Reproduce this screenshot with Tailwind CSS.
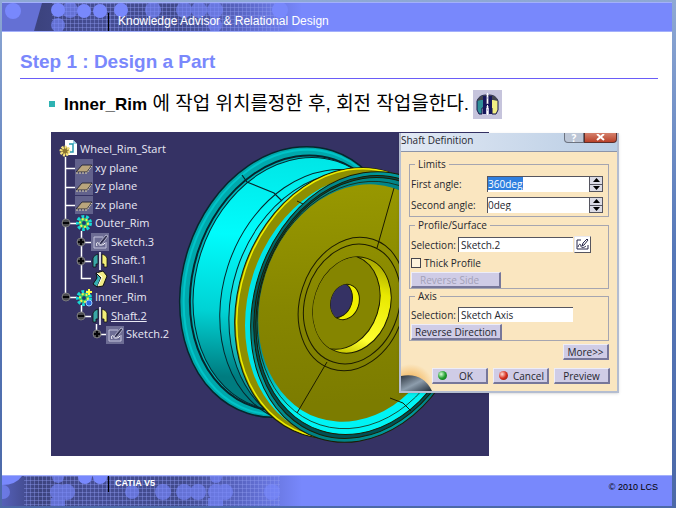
<!DOCTYPE html>
<html lang="ko">
<head>
  <meta charset="UTF-8">
  <meta name="viewport" content="width=device-width, initial-scale=1.0">
  <title>Step 1 : Design a Part</title>
  <script src="https://cdn.jsdelivr.net/npm/@tailwindcss/browser@4"></script>
</head>
<body class="bg-gradient-to-b from-[#8ea8d4] via-[#5577b8] to-[#4c69a8] font-['Liberation_Sans','Noto_Sans_CJK_KR',sans-serif]">

  <!-- Shared icons -->
  <svg class="absolute size-0">
    <defs>
      <pattern id="mesh" width="4" height="4" patternUnits="userSpaceOnUse">
        <path d="M0 .5H4M.5 0V4" stroke="#8f9cf0" stroke-opacity=".4" fill="none"/>
      </pattern>
      <linearGradient id="fade">
        <stop offset="0" stop-color="#5560b8"/>
        <stop offset=".12" stop-color="#3c437e"/>
        <stop offset=".3" stop-color="#454d93"/>
        <stop offset=".6" stop-color="#414a8c"/>
        <stop offset=".8" stop-color="#5a66c4"/>
        <stop offset="1" stop-color="#7888fc"/>
      </linearGradient>
      <symbol id="plane" viewBox="0 0 18 18">
        <path d="M0 0h18v18H0z" fill="#62628c"/>
        <path d="M1 13L7 6h10l-5 7z" fill="#b9a57c" stroke="#2b2b3c"/>
        <path d="M1 14h11l5-7" fill="none" stroke="#e5d9b0" stroke-dasharray="2 1"/>
      </symbol>
      <symbol id="gear" viewBox="0 0 18 18">
        <circle cx="9" cy="9" r="6" fill="none" stroke="#17d9d6" stroke-width="4" stroke-dasharray="2.6 1.6"/>
        <circle cx="9" cy="9" r="5" fill="#35c56b"/>
        <circle cx="9" cy="9" r="4" fill="none" stroke="#f4ef52" stroke-width="2" stroke-dasharray="2 2"/>
        <circle cx="9" cy="9" r="2" fill="#1b3d77"/>
      </symbol>
      <symbol id="sketch" viewBox="0 0 18 18">
        <path d="M0 0h18v18H0z" fill="#6d6d94"/>
        <path d="M3 4h9M3 4v11h12V9" fill="none" stroke="#c3c3dc"/>
        <path d="M6 13C4 9 8 9 8 11s5 1 6-1" fill="none" stroke="#fff"/>
        <path d="M8 12l1-3 6-7 2 1-6 8z" fill="#30304f" stroke="#c8c8e0" stroke-width=".8"/>
      </symbol>
      <symbol id="shaft" viewBox="0 0 18 18">
        <path d="M2 15V6q1-3 5-4v10H5v3z" fill="#3aa7a7" stroke="#111" stroke-width=".8"/>
        <path d="M16 15V6q-1-3-5-4v10h2v3z" fill="#f3ef77" stroke="#111" stroke-width=".8"/>
        <path d="M9 0v18" stroke="#fff" stroke-width="1.6"/>
      </symbol>
      <symbol id="shell" viewBox="0 0 18 18">
        <path d="M5 3L12 1l4 5-4 10-6 1 4-9z" fill="#f2ec86" stroke="#111"/>
        <path d="M5 3l5 5-4 9-4-3 4-6z" fill="#36aeb4" stroke="#111"/>
        <path d="M6 3l5 4-4 9" fill="none" stroke="#fff"/>
      </symbol>
    </defs>
  </svg>

  <div class="flex min-h-screen flex-col pt-[2px] pr-[4px] pb-[2px] pl-[2px]">
    <div class="flex flex-1 flex-col bg-white">

      <!-- Header band -->
      <header class="relative flex h-[30px] items-end border-y border-[#a3b0fb] bg-[#7888fc]">
        <svg class="absolute inset-y-0 left-0 h-full w-[300px]" viewBox="0 0 300 28" preserveAspectRatio="none">
          <path d="M0 0h300v28H0z" fill="url(#fade)"/>
          <path d="M0 0h40l-8 28H0z" fill="#6470d4"/>
          <path d="M50 0h230v28H50z" fill="url(#mesh)"/>
          <g fill="#7888fc">
            <circle cx="11" cy="8" r="8"/>
            <circle cx="56" cy="7" r="7"/>
            <circle cx="82" cy="8" r="7"/>
            <circle cx="98" cy="8" r="7"/>
            <circle cx="119" cy="7" r="7"/>
            <circle cx="278" cy="7" r="8"/>
            <g opacity=".65">
              <circle cx="56" cy="22" r="7"/>
              <circle cx="68" cy="7" r="8"/>
              <circle cx="151" cy="7" r="8"/>
              <circle cx="182" cy="7" r="8"/>
              <circle cx="197" cy="7" r="8"/>
              <circle cx="213" cy="7" r="8"/>
              <circle cx="213" cy="22" r="7"/>
            </g>
          </g>
        </svg>
        <p class="relative ml-[106px] border-l border-black pt-[1px] pb-[2px] pl-[9px] text-[12px] leading-[15px] text-white">Knowledge Advisor &amp; Relational Design</p>
      </header>

      <main class="pt-[18px] pr-[14px] pl-[18px]">
        <h1 class="border-b border-[#6a5cf8] pb-[4px] text-[19px] leading-6 font-bold text-[#7a88fc]">Step 1 : Design a Part</h1>

        <div class="mt-[9px] flex h-8 items-center pl-[29px]">
          <span class="mr-[9px] size-[6px] bg-[#2fb3b3]"></span>
          <p class="text-[19px] leading-8 whitespace-nowrap text-black"><b class="text-[17px]">Inner_Rim</b> 에 작업 위치를정한 후, 회전 작업을한다.</p>
          <svg class="ml-[4px] size-[29px]" viewBox="0 0 29 29">
            <path d="M0 0h29v29H0z" fill="#c6c4dc"/>
            <path d="M4 11q2-6 9-6v13H9v6H6l-2-4z" fill="#2f8f98" stroke="#15154a"/>
            <path d="M25 11q-2-6-9-6v13h3v6h4l2-4z" fill="#f2ee84" stroke="#15154a"/>
            <path d="M4 11q2-6 9-6v5H8zM25 11q-2-6-9-6v5h4z" fill="#44464f"/>
            <path d="M10 6h3v18h-3zM16 6h3v18h-3z" fill="#17175c"/>
            <path d="M13 14h3v2h-3z" fill="#17175c"/>
            <path d="M14.500 3v23" stroke="#fff" stroke-dasharray="4 2"/>
          </svg>
        </div>

        <!-- CAD window -->
        <div class="relative mt-[12px] ml-[31px] h-[324px] w-[438px] bg-[#353264]">
          <svg class="block size-full" viewBox="51 132 438 324">
            <defs>
              <linearGradient id="barrel" x1="0" y1="0" x2=".2" y2="1">
                <stop offset="0" stop-color="#00e0e0"/>
                <stop offset=".4" stop-color="#00fcfc"/>
                <stop offset=".7" stop-color="#00d2d4"/>
                <stop offset=".95" stop-color="#007c80"/>
              </linearGradient>
              <linearGradient id="lip" x1="0" y1="0" x2="0" y2="1">
                <stop offset="0" stop-color="#00989c"/>
                <stop offset=".3" stop-color="#006c70"/>
                <stop offset=".6" stop-color="#00585c"/>
                <stop offset=".85" stop-color="#00a0a4"/>
                <stop offset="1" stop-color="#008084"/>
              </linearGradient>
              <linearGradient id="lower" x1="0" y1="0" x2=".4" y2="1">
                <stop offset=".1" stop-color="#008c90"/>
                <stop offset=".5" stop-color="#006468"/>
                <stop offset=".75" stop-color="#009ca0"/>
                <stop offset=".95" stop-color="#00f4f4"/>
              </linearGradient>
              <linearGradient id="disc" x1="0" y1="0" x2=".3" y2="1">
                <stop offset="0" stop-color="#9c9c00"/>
                <stop offset=".6" stop-color="#868600"/>
                <stop offset="1" stop-color="#7c7c00"/>
              </linearGradient>
              <linearGradient id="bore" x1="0" y1="0" x2="0" y2="1">
                <stop offset="0" stop-color="#a8a800"/>
                <stop offset=".3" stop-color="#e8e800"/>
                <stop offset=".8" stop-color="#ffff30"/>
                <stop offset="1" stop-color="#c8c800"/>
              </linearGradient>
              <clipPath id="recess"><ellipse cx="352" cy="305" rx="38" ry="49" transform="rotate(18 352 305)"/></clipPath>
              <clipPath id="hole"><ellipse cx="345" cy="302" rx="14" ry="18" transform="rotate(18 345 302)"/></clipPath>
            </defs>

            <!-- outer rim -->
            <g stroke="#06262c" fill="none">
              <ellipse cx="290" cy="282" rx="107" ry="138" transform="rotate(18 290 282)" fill="#00a8ac" stroke-width="1.500"/>
              <ellipse cx="291" cy="282" rx="104" ry="135" transform="rotate(18 291 282)" stroke="#00c4c8" stroke-width="2"/>
              <ellipse cx="294" cy="283" rx="101" ry="130" transform="rotate(18 294 283)" fill="#00b4b8" stroke-width="2"/>
              <ellipse cx="297" cy="284" rx="101" ry="129" transform="rotate(18 297 284)" fill="url(#barrel)"/>
              <ellipse cx="323" cy="297" rx="100" ry="130" transform="rotate(18 323 297)"/>
              <ellipse cx="334" cy="301" rx="102" ry="131" transform="rotate(18 334 301)" fill="#40e8ec" fill-opacity=".3"/>
              <path d="M242 175l5 7 27 11 8 8" stroke-width="1.200"/>
            </g>

            <!-- inner rim -->
            <g stroke="#1c1c00" fill="none">
              <ellipse cx="345" cy="303" rx="107" ry="138" transform="rotate(18 345 303)" fill="#8e8e00"/>
              <ellipse cx="346" cy="303" rx="106" ry="137" transform="rotate(18 346 303)" stroke="#f0f000" stroke-width="1.500"/>
              <ellipse cx="354" cy="307" rx="106" ry="134" transform="rotate(18 354 307)" fill="#00e4e8" stroke="none"/>
              <path d="M297 201l6 3 9 4"/>
              <ellipse cx="361" cy="307" rx="107" ry="138" transform="rotate(18 361 307)" fill="url(#lip)"/>
              <ellipse cx="361" cy="307" rx="104" ry="134" transform="rotate(18 361 307)" fill="#005054"/>
              <ellipse cx="361" cy="306" rx="102" ry="131" transform="rotate(18 361 306)" fill="url(#lower)"/>
              <ellipse cx="359" cy="305" rx="99" ry="126" transform="rotate(18 359 305)" stroke-width=".7"/>
              <ellipse cx="356" cy="303" rx="95" ry="121" transform="rotate(18 356 303)" fill="url(#disc)" stroke="none"/>
              <ellipse cx="352" cy="304" rx="52" ry="68" transform="rotate(18 352 304)"/>
              <ellipse cx="352" cy="304" rx="47" ry="61" transform="rotate(18 352 304)"/>
              <ellipse cx="352" cy="305" rx="38" ry="49" transform="rotate(18 352 305)" fill="url(#bore)"/>
              <g clip-path="url(#recess)"><ellipse cx="341" cy="302" rx="38" ry="48" transform="rotate(18 341 302)" fill="#858500"/></g>
              <ellipse cx="345" cy="302" rx="14" ry="18" transform="rotate(18 345 302)" fill="#f0f000"/>
              <g clip-path="url(#hole)"><ellipse cx="338" cy="300" rx="14" ry="18" transform="rotate(18 338 300)" fill="#353264"/></g>
              <path d="M394 188l-17 60M327 362l-30 51M390 398l13 5 8 8"/>
            </g>

            <!-- tree branches -->
            <path d="M65.500 157v141M65.500 168.500H76M65.500 187.500H76M65.500 205.500H76M65.500 223.500H77M65.500 297.500H77M81.500 231v47.500H91M81.500 242.500H91M81.500 261.500H91M81.500 305v11.500H91M96.500 324v10.500H106" fill="none" stroke="#fff" stroke-width="1.500"/>
            <g fill="#4c4c50" stroke="#77777c">
              <circle cx="66" cy="223" r="4"/>
              <circle cx="66" cy="297" r="4"/>
              <circle cx="81" cy="242" r="4"/>
              <circle cx="81" cy="261" r="4"/>
              <circle cx="81" cy="316" r="4"/>
              <circle cx="97" cy="334" r="4"/>
            </g>
            <path d="M63 223h6M63 297h6M78 316h6M78 242h6M81 239v6M78 261h6M81 258v6M94 334h6M97 331v6" stroke="#050508" stroke-width="2"/>
          </svg>

          <!-- Specification tree -->
          <ul class="absolute top-[8px] left-[8px] flex h-[204px] w-[120px] flex-col font-['Open_Sans',sans-serif] text-[11px] text-[#e8e8f4]">
            <li class="flex flex-1 items-center gap-[3px]">
              <svg class="size-[18px]" viewBox="0 0 18 18">
                <path d="M6 0h8l4 4v11H6z" fill="#fff"/><path d="M14 0v4h4" fill="#9fd8e8"/>
                <circle cx="6" cy="11" r="4" fill="#8a7430" stroke="#f5e27c" stroke-width="3" stroke-dasharray="2 1"/>
                <path d="M10 4h4v8h-3" fill="none" stroke="#2a9ab0" stroke-width="1.500"/>
              </svg>Wheel_Rim_Start
            </li>
            <li class="flex flex-1 items-center gap-[2px] pl-[16px]"><svg class="size-[18px]"><use href="#plane"/></svg>xy plane</li>
            <li class="flex flex-1 items-center gap-[2px] pl-[16px]"><svg class="size-[18px]"><use href="#plane"/></svg>yz plane</li>
            <li class="flex flex-1 items-center gap-[2px] pl-[16px]"><svg class="size-[18px]"><use href="#plane"/></svg>zx plane</li>
            <li class="flex flex-1 items-center gap-[2px] pl-[16px]"><svg class="size-[18px]"><use href="#gear"/></svg>Outer_Rim</li>
            <li class="flex flex-1 items-center gap-[2px] pl-[32px]"><svg class="size-[18px]"><use href="#sketch"/></svg>Sketch.3</li>
            <li class="flex flex-1 items-center gap-[2px] pl-[32px]"><svg class="size-[18px]"><use href="#shaft"/></svg>Shaft.1</li>
            <li class="flex flex-1 items-center gap-[2px] pl-[32px]"><svg class="size-[18px]"><use href="#shell"/></svg>Shell.1</li>
            <li class="flex flex-1 items-center gap-[2px] pl-[16px]">
              <svg class="size-[18px]"><use href="#gear"/><circle cx="14" cy="14" r="3" fill="#2a6be0" stroke="#9fd0ff"/><path d="M14 0v6M11 3h6" stroke="#ffff40" stroke-width="2"/></svg>Inner_Rim
            </li>
            <li class="flex flex-1 items-center gap-[2px] pl-[32px]"><svg class="size-[18px]"><use href="#shaft"/></svg><span class="underline">Shaft.2</span></li>
            <li class="flex flex-1 items-center gap-[2px] pl-[47px]"><svg class="size-[18px]"><use href="#sketch"/></svg>Sketch.2</li>
          </ul>

          <!-- Shaft Definition dialog -->
          <form class="absolute top-[1px] left-[348px] w-[220px] border-2 border-t-0 border-[#b4bdd0] bg-[#fae6c0] font-['Open_Sans',sans-serif] text-[10px] leading-3 text-[#26262e] shadow-sm">
            <div class="flex h-[18px] items-start justify-between bg-gradient-to-r from-[#e2e9f4] to-[#b9cde4]">
              <h2 class="pt-[1px]">Shaft Definition</h2>
              <div class="flex">
                <button type="button" class="h-[10px] w-5 rounded-bl border border-t-0 border-[#6c7380] bg-[#bcc6d6] text-[10px] leading-[8px] font-bold text-white">?</button>
                <button type="button" aria-label="Close" class="flex h-[10px] w-[33px] items-center justify-center rounded-br border border-t-0 border-[#5c2f2c] bg-gradient-to-b from-[#d4806c] to-[#b84028]">
                  <svg class="h-[7px] w-[9px]" viewBox="0 0 9 7"><path d="M1 0l7 6M8 0L1 6" stroke="#fff" stroke-width="2"/></svg>
                </button>
              </div>
            </div>

            <div class="border-t border-[#8c94a8] px-[8px] pt-[6px]">
              <fieldset class="border border-[#a5a5b0] px-[1px] pb-[3px]">
                <legend class="ml-[4px] px-[3px]">Limits</legend>
                <div class="mt-[6px] flex h-[16px] items-center">
                  <label for="first" class="w-[76px] whitespace-nowrap">First angle:</label>
                  <span class="flex h-full flex-1 border-t border-l border-[#55555f] bg-white"><span class="h-[13px] bg-[#2f7fe0]"><input id="first" value="360deg" class="block h-[13px] w-[35px] text-white outline-none"></span></span>
                  <span class="mr-[4px] flex h-full w-[14px] flex-col border border-[#55555f]">
                    <button type="button" aria-label="Increase first angle" class="flex flex-1 items-center justify-center border-b border-[#55555f] bg-[#dcdce6]"><svg class="h-[4px] w-[7px]" viewBox="0 0 7 4"><path d="M0 4l3.500-4L7 4z"/></svg></button>
                    <button type="button" aria-label="Decrease first angle" class="flex flex-1 items-center justify-center bg-[#dcdce6]"><svg class="h-[4px] w-[7px]" viewBox="0 0 7 4"><path d="M0 0l3.500 4L7 0z"/></svg></button>
                  </span>
                </div>
                <div class="mt-[5px] flex h-[16px] items-center">
                  <label for="second" class="w-[76px] whitespace-nowrap">Second angle:</label>
                  <span class="flex h-full flex-1 border-t border-l border-[#55555f] bg-white"><input id="second" value="0deg" class="h-[13px] w-full outline-none"></span>
                  <span class="mr-[4px] flex h-full w-[14px] flex-col border border-[#55555f]">
                    <button type="button" aria-label="Increase second angle" class="flex flex-1 items-center justify-center border-b border-[#55555f] bg-[#dcdce6]"><svg class="h-[4px] w-[7px]" viewBox="0 0 7 4"><path d="M0 4l3.500-4L7 4z"/></svg></button>
                    <button type="button" aria-label="Decrease second angle" class="flex flex-1 items-center justify-center bg-[#dcdce6]"><svg class="h-[4px] w-[7px]" viewBox="0 0 7 4"><path d="M0 0l3.500 4L7 0z"/></svg></button>
                  </span>
                </div>
              </fieldset>

              <fieldset class="mt-[2px] border border-[#a5a5b0] px-[1px]">
                <legend class="ml-[4px] px-[3px]">Profile/Surface</legend>
                <div class="mt-[6px] flex h-[15px] items-center">
                  <label for="profile" class="w-[47px] whitespace-nowrap">Selection:</label>
                  <input id="profile" value="Sketch.2" class="h-[15px] w-[115px] border-t border-l border-[#55555f] bg-white pl-[2px] outline-none">
                  <button type="button" aria-label="Edit sketch" class="ml-[1px] h-[17px] w-[17px] border border-[#e8e8f0] border-r-[#55555f] border-b-[#55555f] bg-white">
                    <svg class="size-[15px]" viewBox="0 0 15 15" fill="none" stroke="#26264a"><path d="M6 3H2v9h11V8M3 10c1-4 3-3 3-1s3 2 5 0"/><path d="M7 9l1-3 4-4 1 1-4 5z"/></svg>
                  </button>
                </div>
                <label class="mt-[5px] flex h-3 items-center gap-[3px]"><input type="checkbox" class="size-[10px] appearance-none border border-[#44444c] bg-[#fdf3dc]">Thick Profile</label>
                <button type="button" disabled class="mt-[3px] block h-[16px] w-[90px] border border-[#ededf8] border-r-2 border-r-[#77779a] border-b-2 border-b-[#77779a] bg-[#cfcce6] pl-[8px] text-left leading-3 text-[#a3a1b8]">Reverse Side</button>
              </fieldset>

              <fieldset class="mt-[1px] border border-[#a5a5b0] px-[1px]">
                <legend class="ml-[4px] px-[3px]">Axis</legend>
                <div class="mt-[5px] flex h-[15px] items-center">
                  <label for="axis" class="w-[47px] whitespace-nowrap">Selection:</label>
                  <input id="axis" value="Sketch Axis" class="h-[15px] w-[115px] border-t border-l border-[#55555f] bg-white pl-[2px] outline-none">
                </div>
                <button type="button" class="mt-[2px] h-[16px] w-[91px] border border-[#ededf8] border-r-2 border-r-[#77779a] border-b-2 border-b-[#77779a] bg-[#cfcce6] leading-3 whitespace-nowrap">Reverse Direction</button>
              </fieldset>

              <div class="mt-[3px] flex justify-end">
                <button type="button" class="h-[16px] w-[46px] border border-[#ededf8] border-r-2 border-r-[#77779a] border-b-2 border-b-[#77779a] bg-[#cfcce6] leading-3">More&gt;&gt;</button>
              </div>
            </div>

            <div class="relative mt-[8px] flex justify-end gap-[5px] pr-[7px] pb-[7px]">
              <svg class="absolute bottom-0 left-0 h-[30px] w-[32px]" viewBox="0 0 32 30">
                <defs>
                  <radialGradient id="glow" cx=".3" cy=".8" r=".7"><stop offset=".3" stop-color="#f4b860"/><stop offset="1" stop-color="#fae6c0"/></radialGradient>
                  <linearGradient id="globe" x1="0" y1="0" x2="1" y2="1"><stop offset="0" stop-color="#2e3640"/><stop offset=".5" stop-color="#8d9dac"/><stop offset="1" stop-color="#1f2b38"/></linearGradient>
                </defs>
                <path d="M0 0h32v30H0z" fill="url(#glow)"/>
                <path d="M0 15q22-4 31 15H0z" fill="url(#globe)"/>
              </svg>
              <button type="submit" class="relative flex h-[16px] w-[56px] items-center gap-[12px] border border-[#ededf8] border-r-2 border-r-[#77779a] border-b-2 border-b-[#77779a] bg-[#cfcce6] pl-[5px] leading-3"><span class="size-[9px] rounded-full bg-radial-[at_35%_35%] from-[#d8ffd8] via-[#22a030] to-[#0b5c14]"></span>OK</button>
              <button type="button" class="relative flex h-[16px] w-[56px] items-center gap-[5px] border border-[#ededf8] border-r-2 border-r-[#77779a] border-b-2 border-b-[#77779a] bg-[#cfcce6] pl-[5px] leading-3"><span class="size-[9px] rounded-full bg-radial-[at_35%_35%] from-[#ffe0d8] via-[#d83020] to-[#7c1408]"></span>Cancel</button>
              <button type="button" class="relative h-[16px] w-[56px] border border-[#ededf8] border-r-2 border-r-[#77779a] border-b-2 border-b-[#77779a] bg-[#cfcce6] leading-3">Preview</button>
            </div>
          </form>
        </div>
      </main>

      <!-- Footer band -->
      <footer class="relative mt-auto flex h-[31px] items-start border-t border-[#a3b0fb] bg-[#7888fc]">
        <svg class="absolute inset-y-0 left-0 h-full w-[300px]" viewBox="0 0 300 30" preserveAspectRatio="none">
          <path d="M0 0h300v30H0z" fill="url(#fade)"/>
          <path d="M22 0h256v30H22z" fill="url(#mesh)"/>
          <g fill="#7888fc">
            <path d="M0 0h20q-6 9-20 9z"/>
            <circle cx="83" cy="1" r="7"/>
            <circle cx="98" cy="1" r="7"/>
            <g opacity=".65">
              <circle cx="1" cy="16" r="7"/>
              <circle cx="56" cy="1" r="6"/>
              <circle cx="56" cy="16" r="8"/>
              <circle cx="65" cy="16" r="8"/>
              <path d="M49 22h14v8H49z"/>
              <circle cx="130" cy="16" r="7"/>
              <circle cx="161" cy="16" r="8"/>
              <circle cx="182" cy="16" r="8"/>
              <circle cx="196" cy="16" r="8"/>
              <circle cx="214" cy="1" r="6"/>
              <circle cx="214" cy="16" r="8"/>
              <circle cx="223" cy="16" r="8"/>
              <path d="M206 22h15v8h-15z"/>
              <circle cx="270" cy="16" r="8"/>
            </g>
          </g>
        </svg>
        <p class="relative ml-[106px] border-l border-black pb-[2px] pl-[6px] text-[9px] leading-[14px] font-bold text-white">CATIA V5</p>
        <p class="mt-[5px] mr-[14px] ml-auto text-[9px] leading-3 text-black">© 2010 LCS</p>
      </footer>
    </div>
  </div>
</body>
</html>
